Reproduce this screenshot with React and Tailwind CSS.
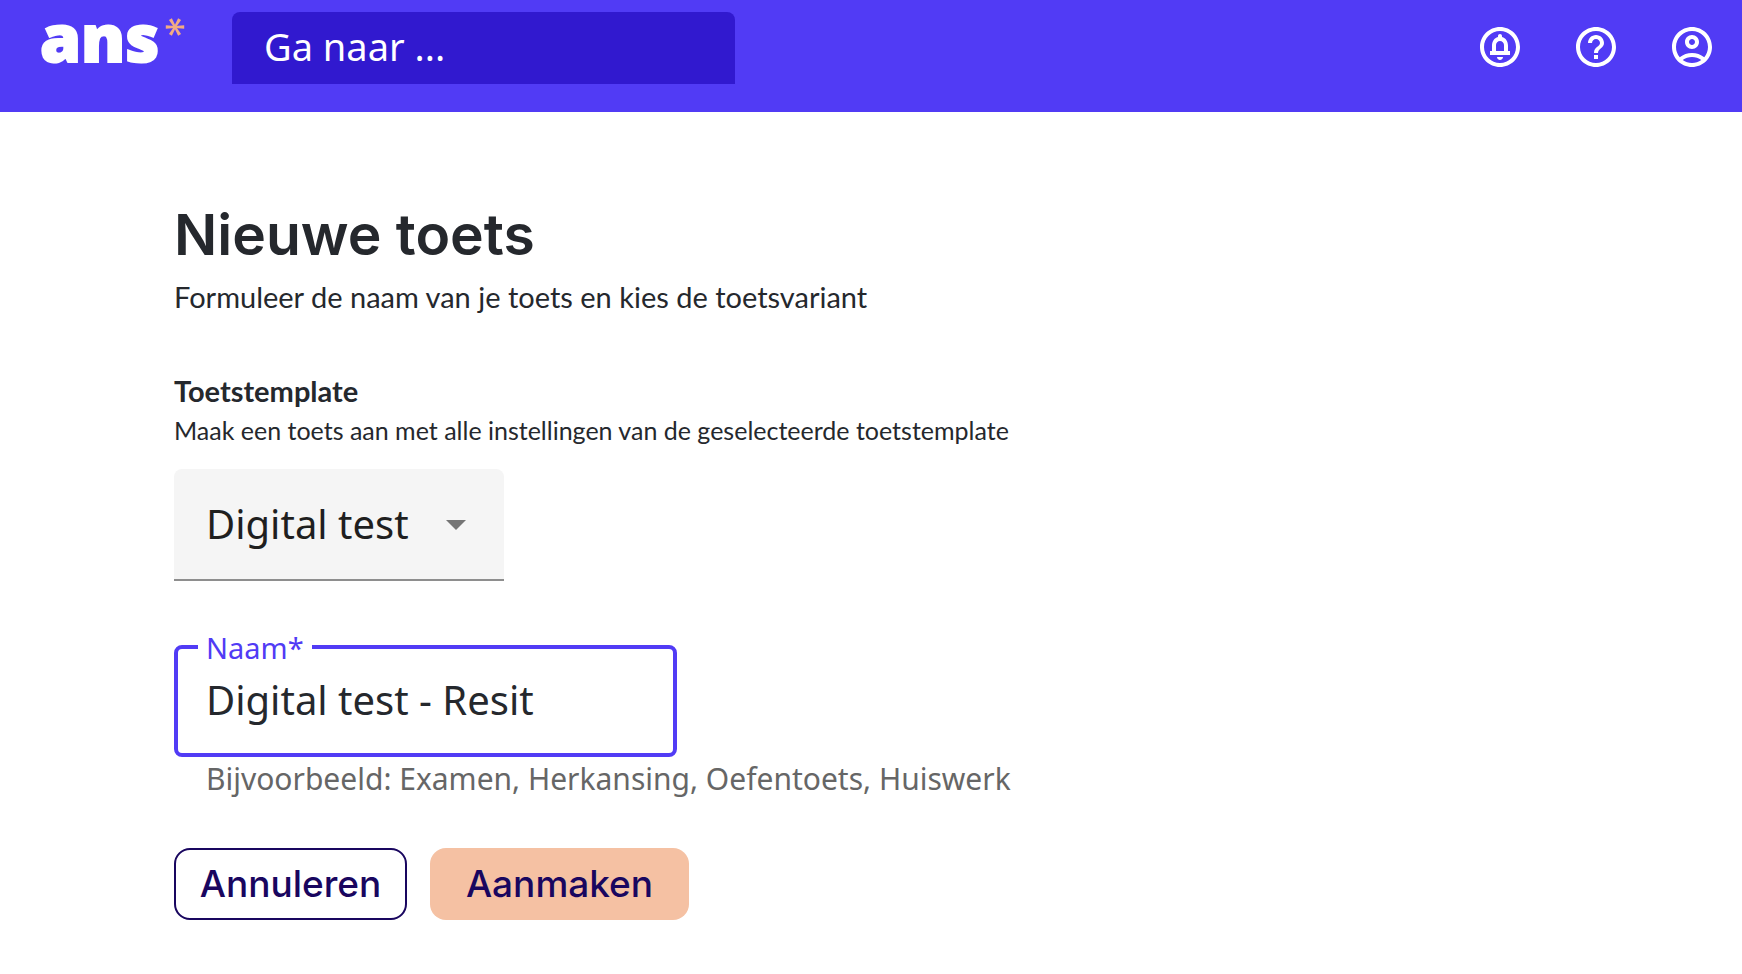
import { useState } from 'react'
import { MdHelpOutline, MdOutlineAccountCircle, MdOutlineCircleNotifications } from 'react-icons/md'

const templates = ['Digital test', 'Paper test', 'Assignment']

function Logo() {
  return (
    <a href="#" aria-label="ans" className="flex w-48 shrink-0 items-start text-white">
      <span className="font-['Open_Sans',sans-serif] text-[66px] font-extrabold leading-[72px] [-webkit-text-stroke:2px_white]">ans</span>
      <svg viewBox="0 0 20 20" className="ml-[6px] mt-[17px] h-5 w-5 text-[#f2ab83]" fill="currentColor" aria-hidden="true">
        <path d="M9 10 L8.3 0.8 h3.4 L11 10 z" transform="rotate(30 10 10)" />
        <path d="M9 10 L8.3 0.8 h3.4 L11 10 z" transform="rotate(90 10 10)" />
        <path d="M9 10 L8.3 0.8 h3.4 L11 10 z" transform="rotate(150 10 10)" />
        <path d="M9 10 L8.3 0.8 h3.4 L11 10 z" transform="rotate(210 10 10)" />
        <path d="M9 10 L8.3 0.8 h3.4 L11 10 z" transform="rotate(270 10 10)" />
        <path d="M9 10 L8.3 0.8 h3.4 L11 10 z" transform="rotate(330 10 10)" />
      </svg>
    </a>
  )
}

function Header() {
  return (
    <header className="flex h-28 items-start bg-[#513bf5] pl-10 pr-[26px]">
      <Logo />
      <input
        type="search"
        aria-label="Ga naar"
        placeholder="Ga naar ..."
        className="mt-3 h-[72px] w-[503px] rounded-t-lg bg-[#3119cf] px-8 pb-1 font-['Noto_Sans',sans-serif] text-[38px] text-white outline-none placeholder:text-white"
      />
      <nav className="ml-auto mt-[23px] flex gap-12 text-white">
        <button type="button" aria-label="Meldingen"><MdOutlineCircleNotifications className="h-12 w-12" /></button>
        <button type="button" aria-label="Help"><MdHelpOutline className="h-12 w-12" /></button>
        <button type="button" aria-label="Account"><MdOutlineAccountCircle className="h-12 w-12" /></button>
      </nav>
    </header>
  )
}

export default function App() {
  const [template, setTemplate] = useState(templates[0])
  const [name, setName] = useState('Digital test - Resit')

  return (
    <div className="min-h-screen bg-white font-['Lato',sans-serif] text-[#25282d]">
      <Header />
      <main className="px-[174px] pt-[87px]">
        <h1 className="font-['Inter',sans-serif] text-[57px] font-semibold leading-[72px]">Nieuwe toets</h1>
        <p className="mt-1 text-[29px] leading-[44px]">Formuleer de naam van je toets en kies de toetsvariant</p>

        <form onSubmit={e => e.preventDefault()}>
          <label htmlFor="template" className="mt-[52px] block text-[29px] font-bold leading-[40px]">Toetstemplate</label>
          <p id="template-hint" className="text-[25px] leading-[38px]">Maak een toets aan met alle instellingen van de geselecteerde toetstemplate</p>
          <div className="relative mt-5 w-[330px]">
            <select
              id="template"
              aria-describedby="template-hint"
              value={template}
              onChange={e => setTemplate(e.target.value)}
              className="h-28 w-full appearance-none rounded-t-lg border-b-2 border-[#8e8e8e] bg-[#f5f5f5] pl-8 pr-16 font-['Noto_Sans',sans-serif] text-[40px] text-[#1f1f1f] outline-none"
            >
              {templates.map(t => <option key={t}>{t}</option>)}
            </select>
            <svg viewBox="0 0 20 10" className="pointer-events-none absolute right-[38px] top-[51px] h-[10px] w-5" fill="#757575" aria-hidden="true">
              <path d="M0 0h20L10 10z" />
            </svg>
          </div>

          <div className="relative mt-16 w-[503px]">
            <label htmlFor="name" className="absolute -top-4 left-6 bg-white px-2 font-['Noto_Sans',sans-serif] text-[29px] leading-[38px] text-[#513bf5]">Naam*</label>
            <input
              id="name"
              type="text"
              aria-describedby="name-hint"
              value={name}
              onChange={e => setName(e.target.value)}
              className="h-28 w-full rounded-lg border-4 border-[#513bf5] px-7 pb-1 font-['Noto_Sans',sans-serif] text-[40px] outline-none"
            />
          </div>
          <p id="name-hint" className="pl-8 font-['Noto_Sans',sans-serif] text-[30px] leading-[44px] text-[#666666]">Bijvoorbeeld: Examen, Herkansing, Oefentoets, Huiswerk</p>

          <div className="mt-[47px] flex gap-[23px] font-['Inter',sans-serif] text-[37px] font-medium text-[#19065f]">
            <button type="button" className="h-[72px] w-[233px] rounded-2xl border-2 border-[#19065f]">Annuleren</button>
            <button type="submit" className="h-[72px] w-[259px] rounded-2xl bg-[#f5c1a3]">Aanmaken</button>
          </div>
        </form>
      </main>
    </div>
  )
}
